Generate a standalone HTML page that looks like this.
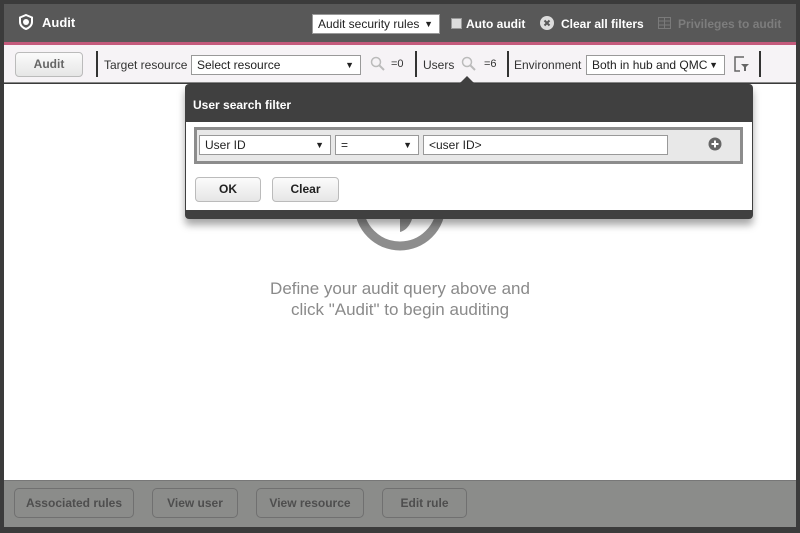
<!DOCTYPE html>
<html><head><meta charset="utf-8"><style>
*{box-sizing:border-box;margin:0;padding:0}
body{width:800px;height:533px;background:#3b3b3b;font-family:"Liberation Sans",sans-serif;position:relative;overflow:hidden}
.abs{position:absolute}
.hdr{left:4px;top:4px;width:792px;height:38px;background:#585858}
.pink{left:4px;top:42px;width:792px;height:3px;background:#c45a7c}
.tb{left:4px;top:45px;width:792px;height:38px;background:#f6f3f6;border-bottom:1px solid #888}
.main{left:4px;top:84px;width:792px;height:396px;background:#fff}
.foot{left:4px;top:480px;width:792px;height:47px;background:#8b8c8a;border-top:1px solid #777}
.wt{color:#fff;font-weight:bold;font-size:12px}
.sel{background:#fff;border:1px solid #999;font-size:12px;color:#222;padding:2px 5px;height:20px;line-height:15px}
.sel i{position:absolute;right:6px;top:2px;font-style:normal;font-size:9px}
.btn{border:1px solid #bbb;border-radius:4px;background:linear-gradient(#fbfbfb,#e6e6e6);font-size:12px;font-weight:bold;color:#444;text-align:center}
.fb{border:1px solid #707070;border-radius:5px;font-size:12px;font-weight:bold;color:#4e4e4e;text-align:center;height:30px;line-height:28px;top:488px}
.t{font-size:12px;color:#333}
.vs{width:2px;background:#333;height:26px;top:51px}
</style></head><body>
<div class="abs hdr"></div>
<svg class="abs" style="left:18px;top:14px" width="16" height="16" viewBox="0 0 16 16"><path d="M8 1 L14 3.5 V8 C14 11.5 11 14 8 15 C5 14 2 11.5 2 8 V3.5 Z" fill="none" stroke="#fff" stroke-width="2"/><circle cx="8" cy="8" r="3" fill="#fff"/></svg>
<div class="abs wt" style="left:42px;top:15px;font-size:13px">Audit</div>
<div class="abs sel" style="left:312px;top:14px;width:128px">Audit security rules<i>▼</i></div>
<div class="abs" style="left:451px;top:18px;width:11px;height:11px;background:#ddd;border:1px solid #999"></div>
<div class="abs wt" style="left:466px;top:17px">Auto audit</div>
<svg class="abs" style="left:540px;top:16px" width="14" height="14" viewBox="0 0 14 14"><circle cx="7" cy="7" r="7" fill="#ddd"/><path d="M4.5 4.5L9.5 9.5M9.5 4.5L4.5 9.5" stroke="#585858" stroke-width="2"/></svg>
<div class="abs wt" style="left:561px;top:17px">Clear all filters</div>
<svg class="abs" style="left:658px;top:17px" width="13" height="12"><rect x="0.5" y="0.5" width="12" height="11" fill="none" stroke="#7a7a7a"/><path d="M0 4H13M0 8H13M6.5 0V12" stroke="#7a7a7a"/></svg>
<div class="abs wt" style="left:678px;top:17px;color:#7d7d7d">Privileges to audit</div>
<div class="abs pink"></div>
<div class="abs tb"></div>
<div class="abs btn" style="left:15px;top:52px;width:68px;height:25px;line-height:23px;color:#666;font-weight:bold">Audit</div>
<div class="abs vs" style="left:96px"></div>
<div class="abs t" style="left:104px;top:58px">Target resource</div>
<div class="abs sel" style="left:191px;top:55px;width:170px">Select resource<i>▼</i></div>
<svg class="abs" style="left:370px;top:56px" width="15" height="15"><circle cx="6" cy="6" r="4.5" fill="none" stroke="#bbb" stroke-width="1.5"/><path d="M9.5 9.5L14 14" stroke="#bbb" stroke-width="2"/></svg>
<div class="abs t" style="left:391px;top:58px;font-size:11px">=0</div>
<div class="abs vs" style="left:415px"></div>
<div class="abs t" style="left:423px;top:58px">Users</div>
<svg class="abs" style="left:461px;top:56px" width="15" height="15"><circle cx="6" cy="6" r="4.5" fill="none" stroke="#bbb" stroke-width="1.5"/><path d="M9.5 9.5L14 14" stroke="#bbb" stroke-width="2"/></svg>
<div class="abs t" style="left:484px;top:58px;font-size:11px">=6</div>
<div class="abs vs" style="left:507px"></div>
<div class="abs t" style="left:514px;top:58px">Environment</div>
<div class="abs sel" style="left:586px;top:55px;width:139px">Both in hub and QMC<i>▼</i></div>
<svg class="abs" style="left:734px;top:56px" width="16" height="16"><path d="M10 1H1V15H6" fill="none" stroke="#666" stroke-width="1.5"/><path d="M7 8H15L12 11V15H10V11Z" fill="#666"/></svg>
<div class="abs vs" style="left:759px"></div>
<div class="abs main"></div>
<svg class="abs" style="left:350px;top:160px" width="100" height="100"><circle cx="50" cy="45" r="41" fill="none" stroke="#8d8d8d" stroke-width="9"/><path d="M50 20 C70 25 68 68 50 72Z" fill="#8d8d8d"/></svg>
<div class="abs" style="left:200px;top:278px;width:400px;text-align:center;font-size:17px;color:#8a8a8a;line-height:21px">Define your audit query above and<br>click "Audit" to begin auditing</div>
<div class="abs" style="left:185px;top:84px;width:568px;height:135px;background:#404040;border-radius:4px;box-shadow:0 6px 8px rgba(0,0,0,.35)"></div>
<div class="abs" style="left:459px;top:76px;width:0;height:0;border-left:8px solid transparent;border-right:8px solid transparent;border-bottom:8px solid #404040"></div>
<div class="abs wt" style="left:193px;top:98px">User search filter</div>
<div class="abs" style="left:186px;top:122px;width:566px;height:88px;background:#fff"></div>
<div class="abs" style="left:194px;top:127px;width:549px;height:37px;background:#e8e8e8;border:3px solid #8c8c8c"></div>
<div class="abs sel" style="left:199px;top:135px;width:132px">User ID<i>▼</i></div>
<div class="abs sel" style="left:335px;top:135px;width:84px">=<i>▼</i></div>
<div class="abs sel" style="left:423px;top:135px;width:245px">&lt;user ID&gt;</div>
<svg class="abs" style="left:708px;top:137px" width="14" height="14"><circle cx="7" cy="7" r="6.5" fill="#666"/><path d="M3.5 7H10.5M7 3.5V10.5" stroke="#fff" stroke-width="2"/></svg>
<div class="abs btn" style="left:195px;top:177px;width:66px;height:25px;line-height:23px;color:#222">OK</div>
<div class="abs btn" style="left:272px;top:177px;width:67px;height:25px;line-height:23px;color:#222">Clear</div>
<div class="abs foot"></div>
<div class="abs fb" style="left:14px;width:120px">Associated rules</div>
<div class="abs fb" style="left:152px;width:86px">View user</div>
<div class="abs fb" style="left:256px;width:108px">View resource</div>
<div class="abs fb" style="left:382px;width:85px">Edit rule</div>
</body></html>
